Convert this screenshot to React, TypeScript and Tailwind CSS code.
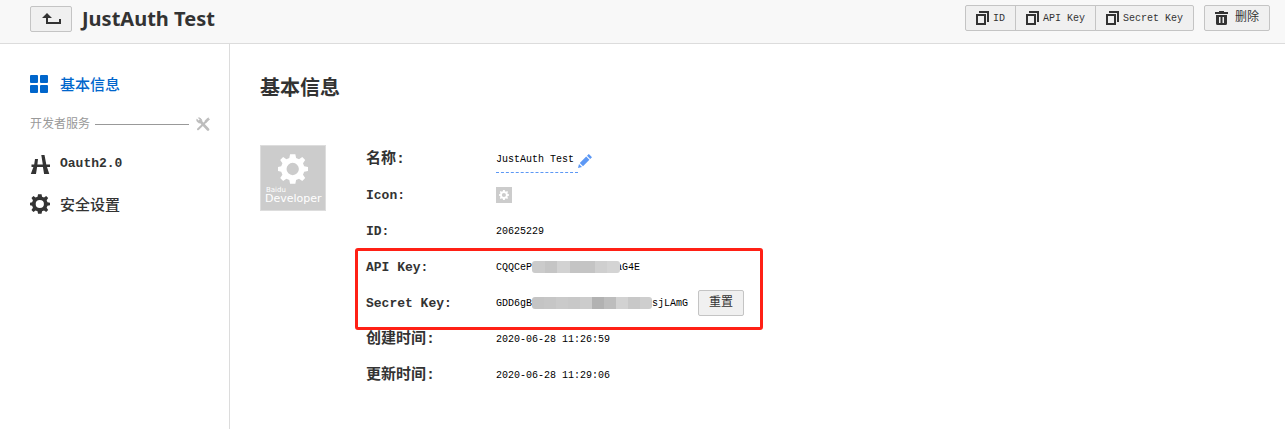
import type { ReactNode } from 'react';

const mono = "font-['Liberation_Mono','Noto_Sans_CJK_SC',monospace]";
const buttonBase =
  'flex h-[26px] cursor-pointer items-center border border-[#c4c4c4] bg-[#f0f0f0] text-[#333]';

const GEAR_PATH =
  'M8.2 0h3.6l.5 2.6 2 .8L16.500 1.900l2 2-1.500 2.200.8 2 2.600.5v2.800l-2.600.5-.8 2 1.500 2.200-2 2-2.200-1.500-2 .8-.5 2.600H8.200l-.5-2.600-2-.8-2.200 1.500-2-2L3 13.900l-.8-2-2.200-.5V8.600l2.200-.5.8-2L1.500 3.900l2-2 2.200 1.500 2-.8zM10 5.800a4.200 4.200 0 1 0 0 8.400 4.200 4.200 0 0 0 0-8.400z';

function GearIcon({ className }: { className: string }) {
  return (
    <svg viewBox="0 0 20.4 20" className={className} fill="currentColor" fillRule="evenodd" aria-hidden="true">
      <path d={GEAR_PATH} />
    </svg>
  );
}

function CopyIcon() {
  return (
    <svg viewBox="0 0 13 14" className="h-[14px] w-[13px]" fill="none" stroke="#333" aria-hidden="true">
      <path d="M1 4h8v9H1z" strokeWidth="2" />
      <path d="M3 1h9v10" strokeWidth="2" />
    </svg>
  );
}

function TrashIcon() {
  return (
    <svg viewBox="0 0 13 14" className="h-[14px] w-[13px]" fill="#333" fillRule="evenodd" aria-hidden="true">
      <path d="M4 0h5v1h4v2H0V1h4zM1 4h11v8.500a1.500 1.500 0 0 1-1.500 1.500h-8A1.500 1.500 0 0 1 1 12.500zM4 6v6h1.500V6zM7.500 6v6H9V6z" />
    </svg>
  );
}

function ToolsIcon() {
  return (
    <svg viewBox="0 0 14 14" className="h-[14px] w-[14px]" fill="none" stroke="#bdbdbd" aria-hidden="true">
      <path d="M4 4l8 8.500" strokeWidth="2.600" strokeLinecap="round" />
      <path d="M.8 2.200L2.800 4 4.200 2.800 2.500.8A3.200 3.200 0 0 1 5.800 4.500L4.300 6A3.200 3.200 0 0 1 .8 2.200z" fill="#bdbdbd" strokeWidth=".8" />
      <path d="M2 12.300L10 4.500" strokeWidth="2" strokeLinecap="round" />
      <path d="M9 3.800L12 .8 13.500 2.200 10.500 5.200z" fill="#bdbdbd" strokeWidth=".8" />
    </svg>
  );
}

function OauthIcon() {
  return (
    <svg viewBox="0 0 20 19" className="h-[19px] w-5" fill="#333" aria-hidden="true">
      <path d="M5 4h3l-.6 5.500h5.400L11.300 0h3.200l1.800 9.500H20V12h-3l2.300 7h-5.200l-1.200-7H7.100l-1.100 7H.8l2.600-7H1.500V9.500h2.700z" />
    </svg>
  );
}

function ActionButton({ icon, children, className }: { icon: ReactNode; children: ReactNode; className: string }) {
  return (
    <button type="button" className={`${buttonBase} px-2.5 ${mono} ${className}`}>
      {icon}
      <span className="whitespace-nowrap">{children}</span>
    </button>
  );
}

function Row({ label, chinese, children }: { label: string; chinese?: boolean; children: ReactNode }) {
  return (
    <div className="flex h-9 items-center">
      <dt className={`w-[130px] shrink-0 font-bold text-[#333] ${mono}`}>
        <span className={chinese ? 'text-[15px]' : 'text-[13px]'}>{label}:</span>
      </dt>
      <dd className={`flex items-center whitespace-nowrap text-[10px] text-black ${mono}`}>{children}</dd>
    </div>
  );
}

function Mask({ colors, className }: { colors: string[]; className: string }) {
  return (
    <span className={`relative flex h-3 overflow-hidden rounded-[3px] ${className}`} aria-hidden="true">
      {colors.map((color, i) => (
        <span key={i} className="flex-1" style={{ backgroundColor: color }} />
      ))}
    </span>
  );
}

const apiMask = ['#cbcbcb', '#c5c5c5', '#d2d2d2', '#c4c4c4', '#c4c4c4', '#cfcfcf', '#d4d4d4'];
const secretMask = ['#c4c4c4', '#c6c6c6', '#cacaca', '#c8c8c8', '#cccccc', '#b2b2b2', '#bdbdbd', '#d2d2d2', '#c8c8c8', '#cecece'];

export default function App() {
  return (
    <div className="flex min-h-screen flex-col bg-white font-['Open_Sans','Noto_Sans_CJK_SC',sans-serif] text-[#333]">
      <header className="flex h-11 items-start border-b border-[#dcdcdc] bg-[#f8f8f8] pr-[15px] pl-[30px]">
        <button type="button" aria-label="返回" className={`${buttonBase} mt-1.5 w-[42px] justify-center rounded-[2px]`}>
          <svg viewBox="0 0 19 12" className="h-3 w-[19px]" fill="#333" aria-hidden="true">
            <path d="M5 0l5 5H6v4h11V6h2v5H4V5H0z" />
          </svg>
        </button>
        <h1 className="ml-2.5 flex-1 font-['Noto_Sans',sans-serif] text-[20px] leading-[37px] font-bold">JustAuth Test</h1>
        <div className="mt-[5px] flex text-[10px]">
          <ActionButton icon={<CopyIcon />} className="gap-1 rounded-l-[2px]">ID</ActionButton>
          <ActionButton icon={<CopyIcon />} className="-ml-px gap-1">API Key</ActionButton>
          <ActionButton icon={<CopyIcon />} className="-ml-px gap-1 rounded-r-[2px]">Secret Key</ActionButton>
          <ActionButton icon={<TrashIcon />} className="ml-2.5 gap-[7px] rounded-[2px] text-xs">删除</ActionButton>
        </div>
      </header>
      <div className="flex flex-1">
        <nav className="w-[230px] shrink-0 border-r border-[#dcdcdc] pt-5 pl-[30px] text-[15px]">
          <a href="#info" className="flex h-10 items-center text-[#0066cc]">
            <svg viewBox="0 0 18 18" className="mr-3 h-[18px] w-[18px]" fill="currentColor" aria-hidden="true">
              <rect width="8" height="8" rx="1" />
              <rect x="10" width="8" height="8" rx="1" />
              <rect y="10" width="8" height="8" rx="1" />
              <rect x="10" y="10" width="8" height="8" rx="1" />
            </svg>
            <span className="font-medium">基本信息</span>
          </a>
          <div className="flex h-10 items-center pr-[19px] text-xs text-[#999]">
            开发者服务
            <span className="mr-[7px] ml-[5px] h-px flex-1 bg-[#999]" />
            <ToolsIcon />
          </div>
          <a href="#oauth" className={`flex h-10 items-center gap-2.5 text-[13px] font-bold ${mono}`}>
            <OauthIcon />
            Oauth2.0
          </a>
          <a href="#security" className="flex h-10 items-center gap-2.5">
            <GearIcon className="h-5 w-5" />
            <span className="font-medium">安全设置</span>
          </a>
        </nav>
        <main className="min-w-0 flex-1 pt-7 pl-[30px]">
          <h2 className="text-[20px] leading-8 font-bold">基本信息</h2>
          <div className="mt-[37px] flex items-start">
            <svg viewBox="0 0 66 66" className="mt-1 h-[66px] w-[66px] shrink-0" role="img" aria-label="Baidu Developer">
              <rect x=".5" y=".5" width="65" height="65" fill="#ccc" stroke="#ddd" />
              <svg x="18" y="9" width="30" height="30" viewBox="0 0 20.4 20">
                <path d={GEAR_PATH} fill="#fff" fillRule="evenodd" />
              </svg>
              <text x="6" y="47" fontSize="7" fill="#fff" fontFamily="DejaVu Sans">Baidu</text>
              <text x="5" y="57" fontSize="11" fill="#fff" fontFamily="DejaVu Sans">Developer</text>
            </svg>
            <dl className="ml-10">
              <Row label="名称" chinese>
                <span className="border-b border-dashed border-[#5c98f5] pt-1.5 pr-1 pb-1 leading-4">JustAuth Test</span>
                <button type="button" aria-label="编辑" className="cursor-pointer pt-1">
                  <svg viewBox="0 0 14 14" className="h-[14px] w-[14px]" fill="#5c98f5" aria-hidden="true">
                    <path d="M0 14l1-4 3 3zM1.800 9l6.400-6.400L11.400 5.800 5 12.200zM9 1.800L10.800 0 14 3.200 12.200 5z" />
                  </svg>
                </button>
              </Row>
              <Row label="Icon">
                <span className="flex h-4 w-4 items-center justify-center bg-[#ccc] text-white">
                  <GearIcon className="h-2.5 w-2.5" />
                </span>
              </Row>
              <Row label="ID">20625229</Row>
              <div className="relative">
                <Row label="API Key">
                  CQQCeP
                  <Mask colors={apiMask} className="-mr-1 w-[88px]" />
                  aG4E
                </Row>
                <Row label="Secret Key">
                  GDD6gB
                  <Mask colors={secretMask} className="w-[120px]" />
                  sjLAmG
                  <button type="button" className={`${buttonBase} ml-2.5 rounded-[2px] px-2.5 text-xs`}>重置</button>
                </Row>
                <span className="pointer-events-none absolute -top-px -right-[19px] -bottom-[9px] -left-[11px] rounded-[3px] border-3 border-[#ff2015]" />
              </div>
              <Row label="创建时间" chinese>2020-06-28 11:26:59</Row>
              <Row label="更新时间" chinese>2020-06-28 11:29:06</Row>
            </dl>
          </div>
        </main>
      </div>
    </div>
  );
}
